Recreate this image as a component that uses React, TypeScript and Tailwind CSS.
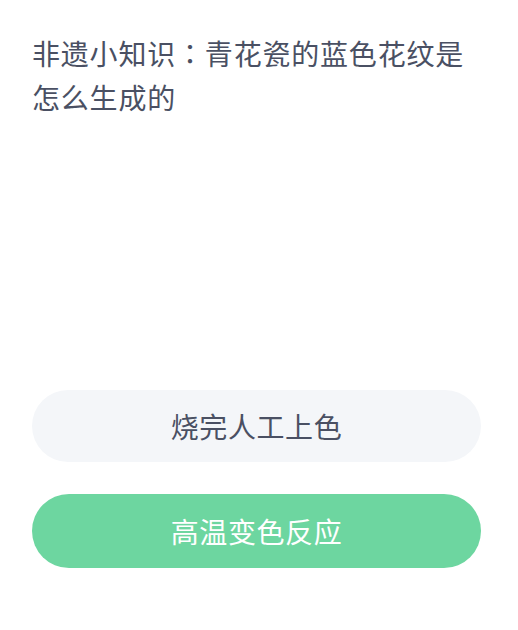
export default function App() {
  return (
    <div
      className="w-[518px] h-[630px] bg-white flex flex-col px-[32px] pt-[31px]"
      style={{ fontFamily: '"Noto Sans CJK SC", "Noto Sans", sans-serif' }}
    >
      <div className="text-[28px] leading-[44px] text-[#4a5063] tracking-[0.8px] pr-[10px]">
        非遗小知识
        <span style={{ fontFamily: '"Noto Sans CJK TC", sans-serif' }}>：</span>
        青花瓷的蓝色花纹是怎么生成的
      </div>
      <div className="mt-[271px] flex flex-col gap-[32px] w-[449px]">
        <div className="h-[72px] rounded-full bg-[#f4f6f9] flex items-center justify-center text-[28px] tracking-[0.6px] text-[#4a5063]">
          烧完人工上色
        </div>
        <div className="h-[74px] rounded-full bg-[#6dd6a0] flex items-center justify-center text-[28px] tracking-[0.6px] text-white">
          高温变色反应
        </div>
      </div>
    </div>
  );
}
